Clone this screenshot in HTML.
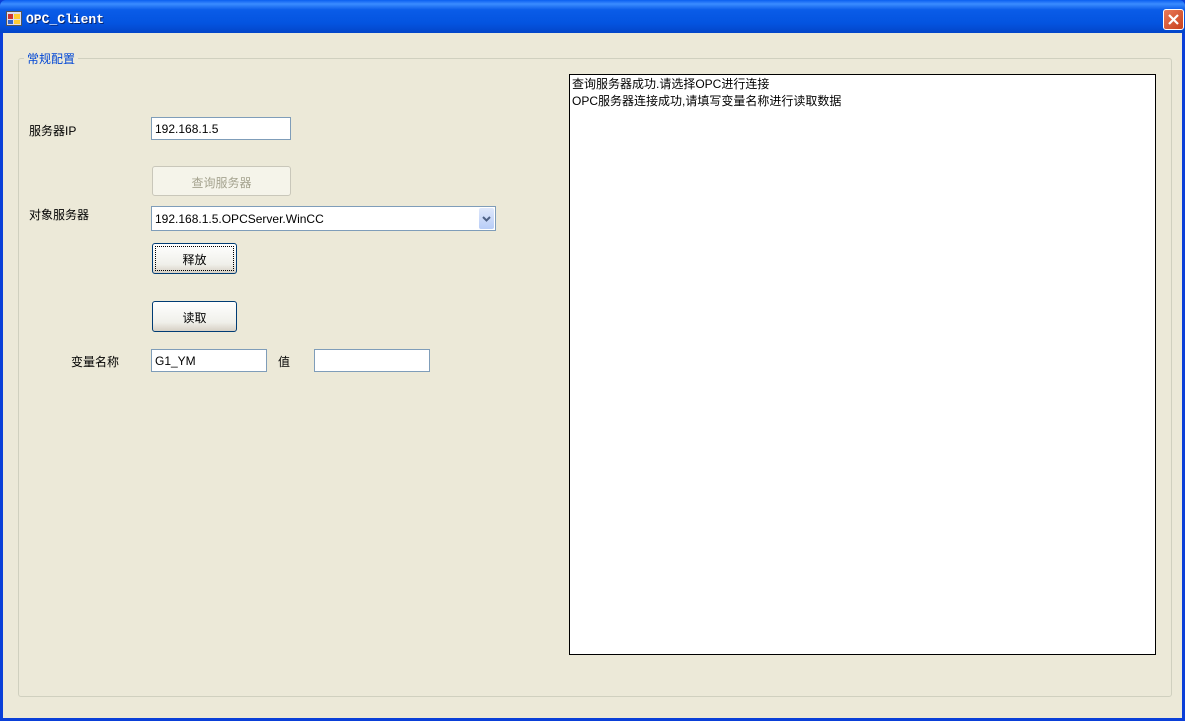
<!DOCTYPE html>
<html><head><meta charset="utf-8"><style>
*{margin:0;padding:0;box-sizing:border-box}
body{width:1185px;height:721px;overflow:hidden;background:#0a3fd8;font-family:"Liberation Sans","Noto Sans CJK SC",sans-serif;font-size:12px;color:#000;position:relative}
.win{position:absolute;left:3px;top:33px;width:1179px;height:685px;background:#ece9d8}
.title{position:absolute;left:0;top:0;width:1185px;height:33px;background:linear-gradient(#0a5ff0 0%,#3b8cff 12%,#0a5ce8 30%,#0454e0 70%,#0345c8 100%);border-radius:6px 6px 0 0}
.title span{position:absolute;left:26px;top:12px;color:#fff;font-family:"Liberation Mono",monospace;font-weight:bold;font-size:13px;text-shadow:1px 1px #0a246a}
.ab{position:absolute}
.in{position:absolute;background:#fff;border:1px solid #7f9db9;padding:4px 0 0 3px;font-size:12px}
.btn{position:absolute;border:1px solid #003c74;border-radius:3px;background:linear-gradient(#fff,#f0f0ea 70%,#d6d0c5);text-align:center;font-size:12px;padding-top:7px}
.lbl{position:absolute;font-size:12px}
</style></head><body>
<div class="title">
 <svg class="ab" style="left:6px;top:11px" width="16" height="15"><rect x="0.5" y="0.5" width="15" height="14" fill="#dde" stroke="#555"/><rect x="2" y="3" width="5" height="5" fill="#c33"/><rect x="8" y="3" width="6" height="5" fill="#fc3"/><rect x="2" y="9" width="5" height="4" fill="#36c"/><rect x="8" y="9" width="6" height="4" fill="#fc3"/></svg>
 <span>OPC_Client</span>
 <div class="ab" style="left:1163px;top:9px;width:21px;height:21px;border:1px solid #fff;border-radius:3px;background:linear-gradient(135deg,#e87a5a,#c8401c)"><svg width="19" height="19"><path d="M5 5L14 14M14 5L5 14" stroke="#fff" stroke-width="2.2"/></svg></div>
</div>
<div class="win">
 <div class="ab" style="left:15px;top:25px;width:1154px;height:639px;border:1px solid #d0d0bf;border-radius:3px"></div>
 <div class="ab" style="left:21px;top:17px;background:#ece9d8;color:#0046d5;padding:0 3px;font-size:12px">常规配置</div>
 <div class="lbl" style="left:26px;top:89px">服务器IP</div>
 <div class="in" style="left:148px;top:84px;width:140px;height:23px">192.168.1.5</div>
 <div class="btn" style="left:149px;top:133px;width:139px;height:30px;border-color:#c9c7ba;color:#a5a38f;background:#f5f4ea">查询服务器</div>
 <div class="lbl" style="left:26px;top:173px">对象服务器</div>
 <div class="in" style="left:148px;top:173px;width:345px;height:25px;padding-top:5px">192.168.1.5.OPCServer.WinCC
  <div class="ab" style="right:1px;top:1px;width:15px;height:21px;background:linear-gradient(#dfe8fb,#b8cdf7);border-radius:2px"><svg width="15" height="21"><path d="M4 9l3.5 3.5L11 9" stroke="#4d6185" stroke-width="2" fill="none"/></svg></div>
 </div>
 <div class="btn" style="left:149px;top:210px;width:85px;height:31px;outline:1px dotted #000;outline-offset:-4px">释放</div>
 <div class="btn" style="left:149px;top:268px;width:85px;height:31px">读取</div>
 <div class="lbl" style="left:68px;top:320px">变量名称</div>
 <div class="in" style="left:148px;top:316px;width:116px;height:23px">G1_YM</div>
 <div class="lbl" style="left:275px;top:320px">值</div>
 <div class="in" style="left:311px;top:316px;width:116px;height:23px"></div>
 <div class="ab" style="left:566px;top:41px;width:587px;height:581px;background:#fff;border:1px solid #000;padding:1px 0 0 2px;line-height:17px;font-size:12px">查询服务器成功.请选择OPC进行连接<br>OPC服务器连接成功,请填写变量名称进行读取数据</div>
</div>
</body></html>
